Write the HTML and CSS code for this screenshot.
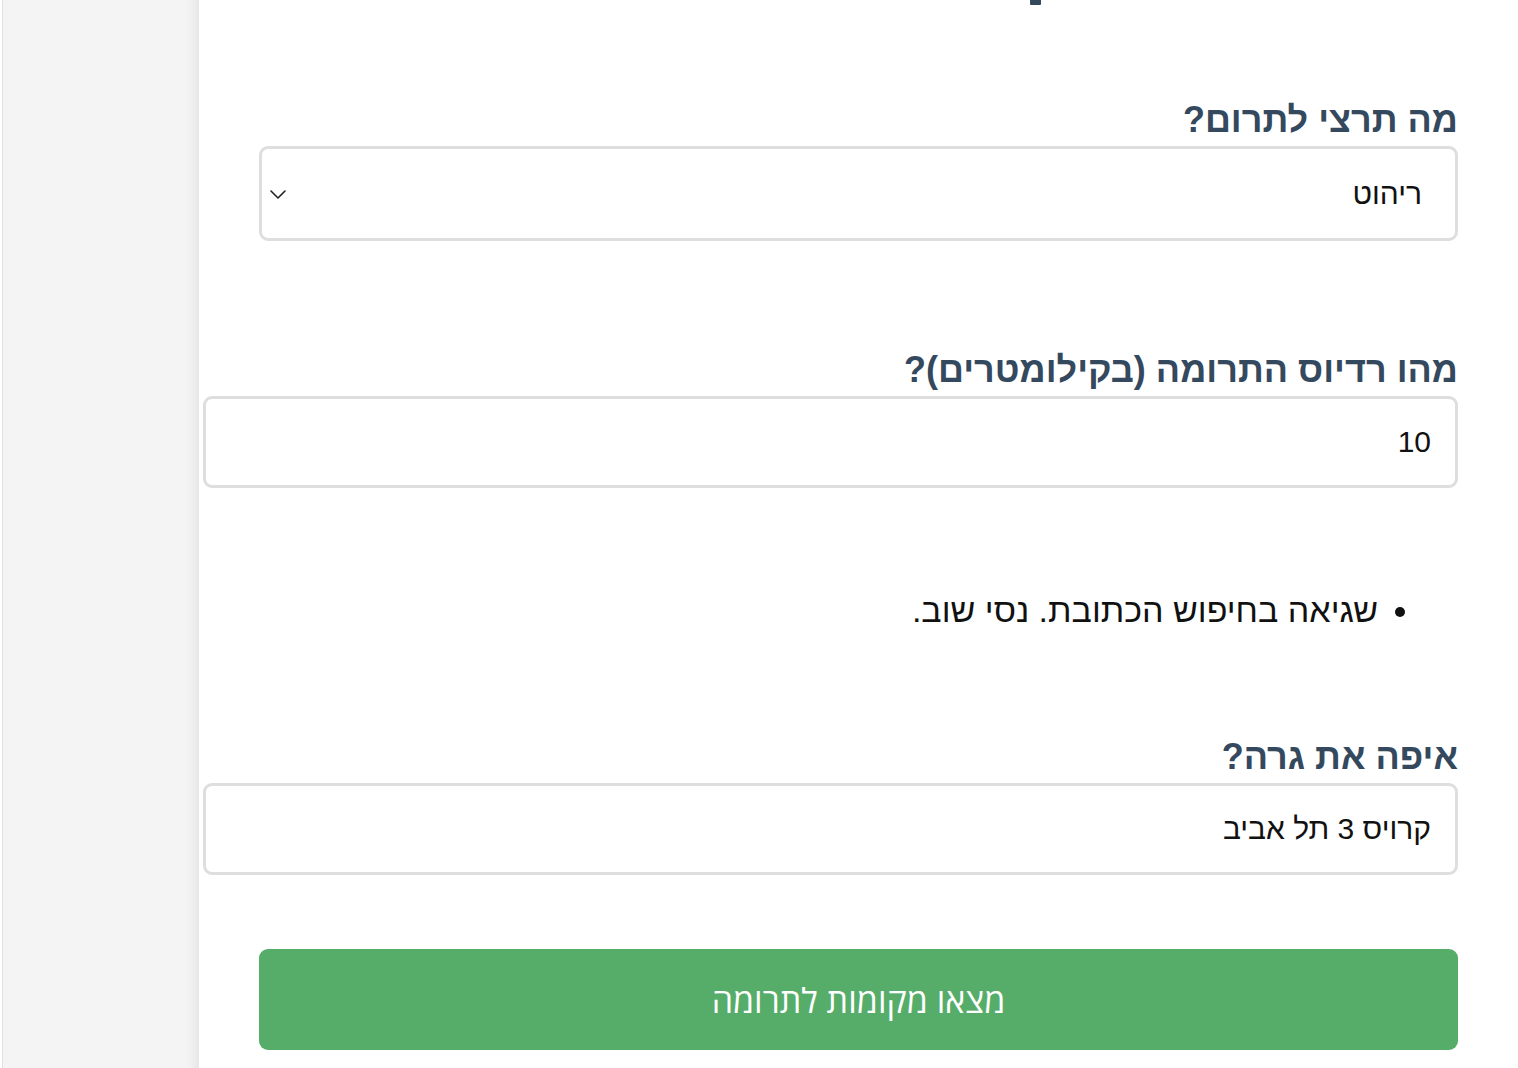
FILE: index.html
```html
<!DOCTYPE html>
<html lang="he">
<head>
<meta charset="utf-8">
<title>תרומה</title>
<link rel="stylesheet" href="styles.css">
</head>
<body>
<div class="layout">
  <aside class="sidebar"></aside>
  <main class="main" dir="rtl">
    <div class="title-tail"></div>
    <form class="form">
      <div class="field">
        <label class="label">מה תרצי לתרום?</label>
        <div class="select">
          <span class="select-value">ריהוט</span>
          <svg class="chevron" width="16" height="9" viewBox="0 0 16 9" aria-hidden="true"><path d="M1 1 L8 8 L15 1" fill="none" stroke="#222" stroke-width="1.6" stroke-linecap="round" stroke-linejoin="round"/></svg>
        </div>
      </div>
      <div class="field field-radius">
        <label class="label">מהו רדיוס התרומה (בקילומטרים)?</label>
        <input class="input" type="text" value="10">
      </div>
      <ul class="errors">
        <li>שגיאה בחיפוש הכתובת. נסי שוב.</li>
      </ul>
      <div class="field field-address">
        <label class="label">איפה את גרה?</label>
        <input class="input" type="text" value="קרויס 3 תל אביב">
      </div>
      <button class="submit" type="button">מצאו מקומות לתרומה</button>
    </form>
  </main>
</div>
</body>
</html>
```

FILE: styles.css
```css
html, body {
  margin: 0;
  padding: 0;
  background: #ffffff;
  height: 100%;
  overflow: hidden;
}

.layout {
  display: flex;
  height: 1068px;
  padding-left: 2px;
}

.sidebar {
  width: 196px;
  flex: none;
  background: #f4f4f4;
  border-left: 1px solid #e2e2e2;
  box-shadow: inset -14px 0 12px -10px rgba(0, 0, 0, 0.07);
}

.main {
  flex: 1;
  background: #ffffff;
  padding-right: 60px;
  font-family: "Liberation Sans", Arial, sans-serif;
}

.title-tail {
  width: 11px;
  height: 5px;
  background: #34495e;
  border-radius: 0 0 1px 1px;
  margin-right: 417px;
}

.form {
  display: flex;
  flex-direction: column;
  align-items: flex-start;
  padding-top: 95px;
}

.field {
  display: flex;
  flex-direction: column;
  align-items: flex-start;
}

.label {
  display: block;
  font-family: "Liberation Sans", Arial, sans-serif;
  font-weight: 700;
  font-size: 36px;
  line-height: 40px;
  color: #34495e;
  margin-bottom: 6px;
}

.select {
  box-sizing: border-box;
  width: 1199px;
  height: 95px;
  border: 3px solid #dedede;
  border-radius: 9px;
  background: #fff;
  display: flex;
  align-items: center;
  justify-content: space-between;
  padding: 0 33px 0 8px;
}

.select-value {
  font-size: 30px;
  color: #111;
  line-height: 1;
}

.chevron {
  display: block;
  margin-top: 1px;
}

.field-radius {
  margin-top: 109px;
}

.input {
  box-sizing: border-box;
  width: 1255px;
  height: 92px;
  border: 3px solid #dedede;
  border-radius: 9px;
  padding: 0 24px;
  font-family: "Liberation Sans", Arial, sans-serif;
  font-size: 30px;
  color: #111;
  background: #fff;
  outline: none;
  direction: rtl;
}

.errors {
  margin: 103px 0 0 0;
  padding: 0 80px 0 0;
  font-size: 34px;
  line-height: 38px;
  color: #111;
}

.field-address {
  margin-top: 108px;
}

.submit {
  width: 1199px;
  height: 101px;
  margin-top: 74px;
  border: none;
  border-radius: 9px;
  background: #56ad6a;
  color: #ffffff;
  font-family: "Open Sans", "Noto Sans", "Liberation Sans", sans-serif;
  font-size: 34px;
  padding: 0;
  cursor: pointer;
}
```
